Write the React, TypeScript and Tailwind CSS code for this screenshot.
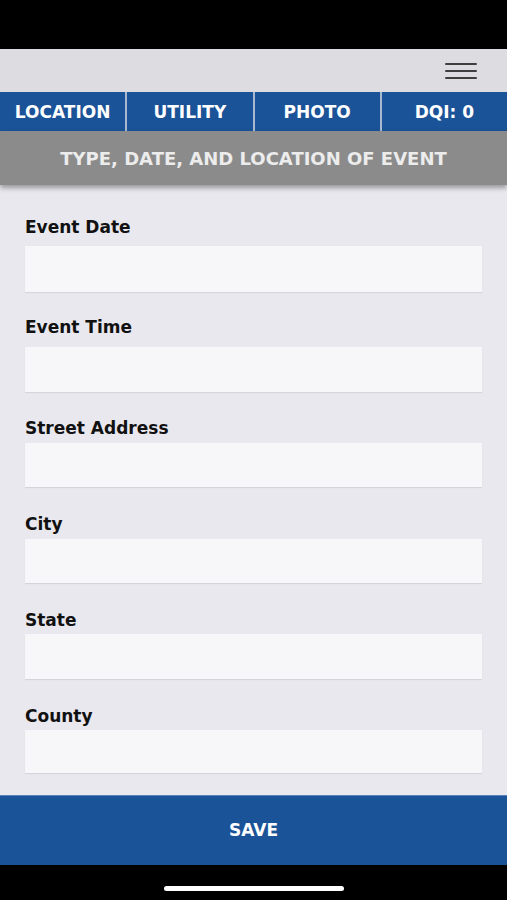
import React from "react";

const fields = [
  { label: "Event Date", gap: "pt-[32px]", mt: "mt-[9px]", h: "h-[46px]" },
  { label: "Event Time", gap: "pt-[25px]", mt: "mt-[10px]", h: "h-[45px]" },
  { label: "Street Address", gap: "pt-[26px]", mt: "mt-[5px]", h: "h-[44px]" },
  { label: "City", gap: "pt-[27px]", mt: "mt-[5px]", h: "h-[44px]" },
  { label: "State", gap: "pt-[27px]", mt: "mt-[4px]", h: "h-[45px]" },
  { label: "County", gap: "pt-[27px]", mt: "mt-[4px]", h: "h-[43px]" },
];

const tabs = ["LOCATION", "UTILITY", "PHOTO", "DQI: 0"];

const App = () => {
  return (
    <div
      className="w-[507px] h-[900px] flex flex-col bg-black overflow-hidden"
      style={{ fontFamily: '"DejaVu Sans", "Liberation Sans", sans-serif' }}
    >
      {/* status bar */}
      <div className="h-[49px] bg-black shrink-0" />

      {/* top bar */}
      <div className="h-[43px] bg-[#dcdce1] flex items-center justify-end pr-[30px] shrink-0">
        <button className="flex flex-col gap-[5px] w-[32px] pt-[1px]">
          <span className="block h-[2px] w-full bg-[#3f3f3f] rounded-full" />
          <span className="block h-[2px] w-full bg-[#3f3f3f] rounded-full" />
          <span className="block h-[2px] w-full bg-[#3f3f3f] rounded-full" />
        </button>
      </div>

      {/* tabs */}
      <div className="grid grid-cols-4 gap-[2px] bg-[#a9b9d1] h-[39px] shrink-0">
        {tabs.map((t) => (
          <div
            key={t}
            className="bg-[#1b5398] flex items-center justify-center pt-[2px] text-white font-bold text-[17px] leading-none"
          >
            {t}
          </div>
        ))}
      </div>

      {/* section header */}
      <div className="relative z-10 h-[54px] bg-[#8b8b8b] flex items-center justify-center pt-[1px] shadow-[0_3px_5px_rgba(0,0,0,0.35)] shrink-0">
        <span className="text-[#ececec] font-bold text-[18px] leading-none">
          TYPE, DATE, AND LOCATION OF EVENT
        </span>
      </div>

      {/* form */}
      <div className="flex-1 bg-[#e9e8ee] px-[25px]">
        {fields.map((f) => (
          <div key={f.label} className={f.gap}>
            <label className="block text-[17px] leading-[20px] font-bold text-[#111]">
              {f.label}
            </label>
            <input
              className={`block w-full ${f.mt} ${f.h} bg-[#f7f7f9] shadow-[0_1px_1px_rgba(0,0,0,0.08)] outline-none`}
            />
          </div>
        ))}
      </div>

      {/* save */}
      <button className="h-[70px] bg-[#1b5398] text-white font-bold text-[17px] flex items-center justify-center shrink-0 border-t border-[#5a82b8]">
        SAVE
      </button>

      {/* home indicator */}
      <div className="h-[35px] bg-black flex justify-center pt-[21px] shrink-0">
        <div className="w-[180px] h-[5px] rounded-full bg-white" />
      </div>
    </div>
  );
};

export default App;
